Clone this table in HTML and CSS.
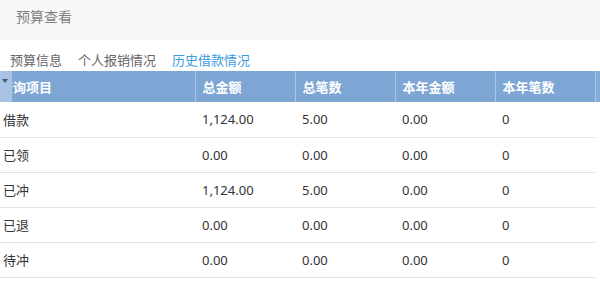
FILE: index.html
```html
<!DOCTYPE html>
<html lang="zh">
<head>
<meta charset="utf-8">
<link rel="stylesheet" href="styles.css">
</head>
<body>
<div class="topbar"><span class="title">预算查看</span></div>
<div class="tabs">
  <span class="tab">预算信息</span>
  <span class="tab">个人报销情况</span>
  <span class="tab active">历史借款情况</span>
</div>
<div class="grid-wrap">
  <div class="strip"><span class="tri"></span></div>
  <table class="grid">
    <colgroup>
      <col class="c1"><col class="cn"><col class="cn"><col class="cn"><col class="cn"><col class="clast">
    </colgroup>
    <thead>
      <tr>
        <th class="first">查询项目</th><th>总金额</th><th>总笔数</th><th>本年金额</th><th>本年笔数</th><th class="last"></th>
      </tr>
    </thead>
    <tbody>
      <tr><td class="first">借款</td><td>1,124.00</td><td>5.00</td><td>0.00</td><td>0</td><td class="last"></td></tr>
      <tr><td class="first">已领</td><td>0.00</td><td>0.00</td><td>0.00</td><td>0</td><td class="last"></td></tr>
      <tr><td class="first">已冲</td><td>1,124.00</td><td>5.00</td><td>0.00</td><td>0</td><td class="last"></td></tr>
      <tr><td class="first">已退</td><td>0.00</td><td>0.00</td><td>0.00</td><td>0</td><td class="last"></td></tr>
      <tr><td class="first">待冲</td><td>0.00</td><td>0.00</td><td>0.00</td><td>0</td><td class="last"></td></tr>
    </tbody>
  </table>
</div>
</body>
</html>
```
FILE: styles.css
```css
html, body {
  margin: 0;
  padding: 0;
  background: #fff;
  overflow: hidden;
}
body {
  font-family: "Noto Sans", "Noto Sans CJK SC", sans-serif;
  font-size: 13px;
  color: #333;
}
.topbar {
  height: 40px;
  background: #f8f8f8;
  padding-left: 16px;
  box-sizing: border-box;
}
.title {
  display: block;
  line-height: 34px;
  font-size: 14px;
  color: #808080;
}
.tabs {
  height: 31px;
  box-sizing: border-box;
  padding: 10px 0 0 10px;
  display: flex;
  gap: 16px;
  line-height: 20px;
}
.tab {
  color: #666;
}
.tab.active {
  color: #3d9be0;
}
.grid-wrap {
  position: relative;
  width: 600px;
  overflow: hidden;
}
.strip {
  position: absolute;
  left: 0;
  top: 0;
  width: 12px;
  height: 31px;
  background: #a7c2e2;
  z-index: 1;
}
.tri {
  position: absolute;
  left: 2px;
  top: 8px;
  width: 0;
  height: 0;
  border-left: 3px solid transparent;
  border-right: 3px solid transparent;
  border-top: 4px solid #4a5a6a;
}
.grid {
  border-collapse: collapse;
  table-layout: fixed;
  width: 620px;
}
.c1 { width: 195px; }
.cn { width: 100px; }
.clast { width: 25px; }
.grid th {
  height: 31px;
  padding: 0 0 0 7px;
  background: #7ea6d4;
  color: #fff;
  font-weight: bold;
  text-align: left;
  border-right: 1px solid #a9c5e5;
  box-sizing: border-box;
  white-space: nowrap;
  overflow: hidden;
}
.grid th.first {
  padding-left: 0;
}
.grid th.last {
  background: #85abd7;
  border-right: none;
}
.grid td {
  height: 35px;
  padding: 0 0 0 7px;
  box-sizing: border-box;
  border-bottom: 1px solid #e2e2e2;
  white-space: nowrap;
}
.grid td.first {
  padding-left: 3px;
}
.grid td.last {
  border-bottom: none;
}
```
